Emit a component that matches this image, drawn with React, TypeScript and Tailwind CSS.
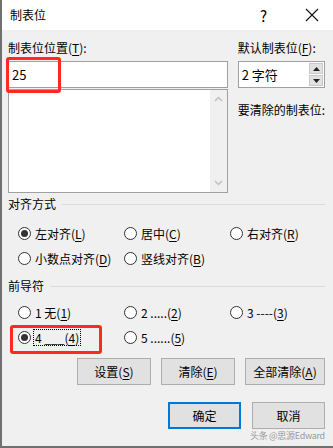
import React from "react";

const FONT = { fontFamily: '"Noto Sans CJK SC", "Noto Sans", sans-serif' };

function Key({ k }: { k: string }) {
  return (
    <>
      (<span className="underline underline-offset-2">{k}</span>)
    </>
  );
}

function Radio({ checked, label, k, focus }: { checked?: boolean; label: string; k: string; focus?: boolean }) {
  return (
    <div className="flex items-center h-[17px]">
      <span className="w-[13px] h-[13px] rounded-full border border-[#333] bg-white flex items-center justify-center shrink-0">
        {checked && <span className="w-[7px] h-[7px] rounded-full bg-[#333]" />}
      </span>
      <span
        className={
          "ml-[3px] px-[1px] leading-[15px] whitespace-pre " +
          (focus ? "outline outline-1 outline-dotted outline-black" : "")
        }
      >
        {label}
        <Key k={k} />
      </span>
    </div>
  );
}

function Section({ title }: { title: string }) {
  return (
    <div className="flex items-center h-[16px]">
      <span className="leading-[16px]">{title}</span>
      <span className="flex-1 h-px bg-[#dcdcdc] ml-[6px]" />
    </div>
  );
}

function Btn({ children, w, primary }: { children: React.ReactNode; w: string; primary?: boolean }) {
  return (
    <div
      className={
        "h-[27px] flex items-center justify-center bg-[#e1e1e1] " +
        w +
        (primary ? " border-2 border-[#0078d7]" : " border border-[#adadad]")
      }
    >
      {children}
    </div>
  );
}

export default function App() {
  return (
    <div
      className="relative w-[333px] h-[448px] bg-[#f0f0f0] text-[12px] text-black border-l-2 border-b-2 border-[#707070] overflow-hidden"
      style={FONT}
    >
      {/* Title bar */}
      <div className="h-[30px] bg-white flex items-center pl-[8px] pr-[14px]">
        <span className="text-[12px]">制表位</span>
        <span className="ml-auto mr-[38px] text-[15px] leading-none">?</span>
        <svg width="14" height="14" viewBox="0 0 14 14">
          <path d="M1 1L13 13M13 1L1 13" stroke="#111" strokeWidth="1.1" />
        </svg>
      </div>

      <div className="pl-[6px] pr-[8px]">
        {/* Top area */}
        <div className="flex mt-[10px]">
          <div className="w-[221px] flex flex-col">
            <div className="leading-[16px]">
              制表位位置<Key k="T" />:
            </div>
            <div className="mt-[5px] h-[27px] bg-white border border-[#a0a0a0] flex items-center pl-[3px] text-[13px]">
              25
            </div>
            <div className="mt-[1px] h-[104px] bg-white border border-[#a0a0a0] flex">
              <div className="flex-1" />
              <div className="w-[17px] bg-[#f0f0f0] flex flex-col items-center justify-between py-[6px]">
                <svg width="9" height="6" viewBox="0 0 9 6">
                  <path d="M1 5L4.5 1.5L8 5" stroke="#c0c0c0" strokeWidth="1.5" fill="none" />
                </svg>
                <svg width="9" height="6" viewBox="0 0 9 6">
                  <path d="M1 1L4.5 4.5L8 1" stroke="#c0c0c0" strokeWidth="1.5" fill="none" />
                </svg>
              </div>
            </div>
          </div>
          <div className="ml-[10px] flex-1 flex flex-col">
            <div className="leading-[16px] whitespace-nowrap">
              默认制表位<Key k="F" />:
            </div>
            <div className="mt-[5px] h-[27px] bg-white border border-[#a0a0a0] flex">
              <div className="flex-1 flex items-center pl-[3px] text-[13px]">2 字符</div>
              <div className="w-[16px] flex flex-col gap-[1px] p-[1px]">
                <div className="flex-1 bg-[#e1e1e1] border border-[#c8c8c8] flex items-center justify-center">
                  <svg width="7" height="4" viewBox="0 0 7 4"><path d="M0 4L3.5 0L7 4Z" fill="#222" /></svg>
                </div>
                <div className="flex-1 bg-[#e1e1e1] border border-[#c8c8c8] flex items-center justify-center">
                  <svg width="7" height="4" viewBox="0 0 7 4"><path d="M0 0L3.5 4L7 0Z" fill="#222" /></svg>
                </div>
              </div>
            </div>
            <div className="mt-[14px] leading-[16px] whitespace-nowrap">要清除的制表位:</div>
          </div>
        </div>

        {/* Alignment */}
        <div className="mt-[3px]">
          <Section title="对齐方式" />
          <div className="grid grid-cols-[106px_106px_1fr] gap-y-[8px] pl-[10px] mt-[13px]">
            <Radio checked label="左对齐" k="L" />
            <Radio label="居中" k="C" />
            <Radio label="右对齐" k="R" />
            <Radio label="小数点对齐" k="D" />
            <Radio label="竖线对齐" k="B" />
          </div>
        </div>

        {/* Leader */}
        <div className="mt-[11px]">
          <Section title="前导符" />
          <div className="grid grid-cols-[106px_106px_1fr] gap-y-[8px] pl-[10px] mt-[10px]">
            <Radio label="1 无" k="1" />
            <Radio label="2 ....." k="2" />
            <Radio label="3 ----" k="3" />
            <Radio checked focus label="4 ___" k="4" />
            <Radio label="5 ......" k="5" />
          </div>
        </div>

        {/* Buttons */}
        <div className="flex justify-end gap-[10px] mt-[12px]">
          <Btn w="w-[74px]">
            设置<Key k="S" />
          </Btn>
          <Btn w="w-[74px]">
            清除<Key k="E" />
          </Btn>
          <Btn w="w-[80px]">
            全部清除<Key k="A" />
          </Btn>
        </div>
        <div className="flex justify-end gap-[11px] mt-[17px]">
          <Btn w="w-[73px]" primary>
            确定
          </Btn>
          <Btn w="w-[73px]">取消</Btn>
        </div>
      </div>

      {/* Annotations */}
      <div className="absolute left-[4px] top-[57px] w-[55px] h-[36px] border-[3px] border-[#ff2a1f] rounded-[3px]" />
      <div className="absolute left-[8px] top-[325px] w-[92px] h-[29px] border-[3px] border-[#ff2a1f] rounded-[3px]" />
      <div className="absolute left-[248px] top-[431px] text-[9px] tracking-[-0.3px] text-[#9a9a9a] leading-none whitespace-nowrap">
        头条 @思源Edward
      </div>
    </div>
  );
}
